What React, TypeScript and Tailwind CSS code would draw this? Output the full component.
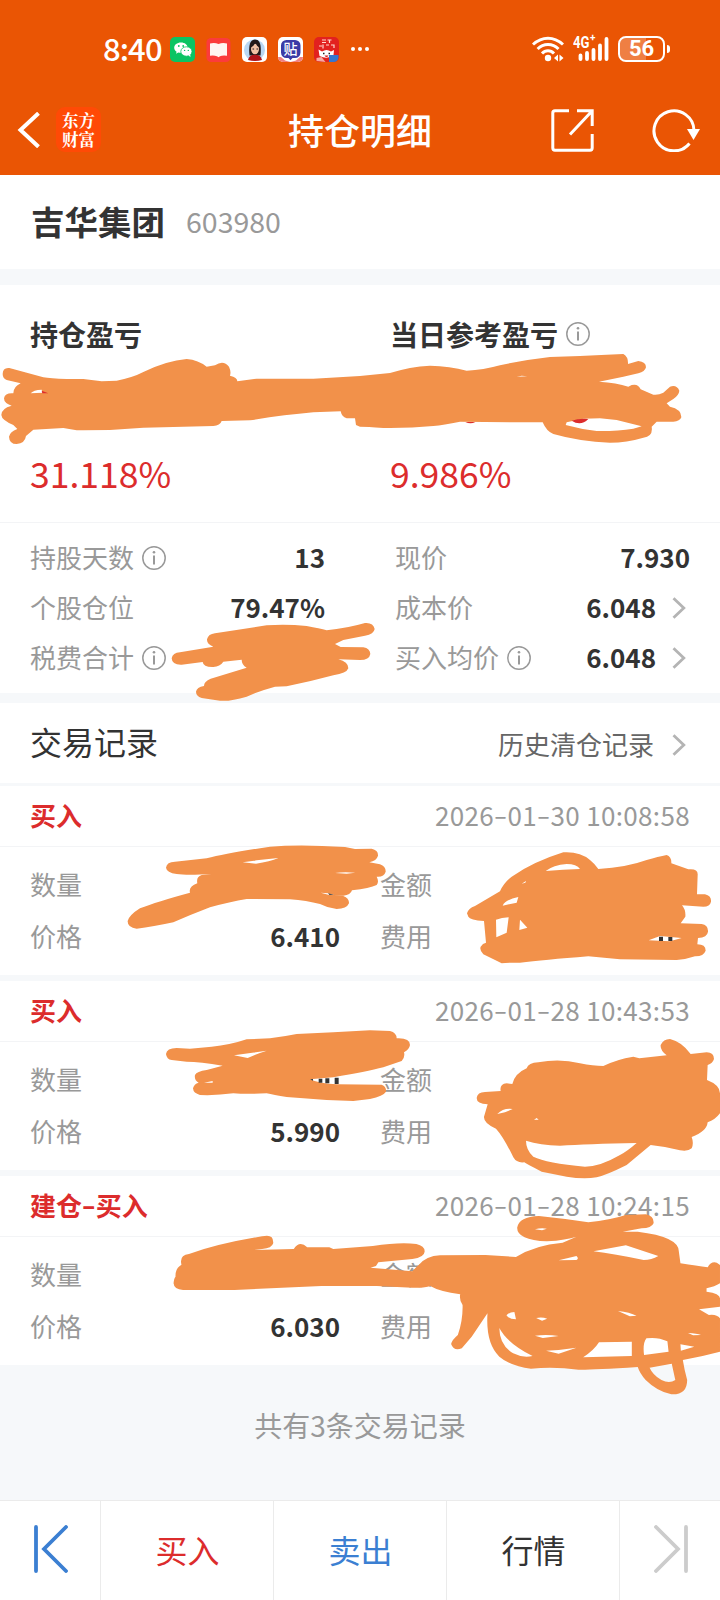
import { Fragment } from 'react';
import type { ReactNode } from 'react';

type Trade = {
    type: string;
    time: string;
    price: string;
};

const trades: Trade[] = [
    { type: '买入', time: '2026-01-30 10:08:58', price: '6.410' },
    { type: '买入', time: '2026-01-28 10:43:53', price: '5.990' },
    { type: '建仓-买入', time: '2026-01-28 10:24:15', price: '6.030' },
];

// Renders text with wider hyphens
const Dashed = ({ text }: { text: string }) => (
    <>
        {text.split('-').map((part, i) => (
            <Fragment key={i}>
                {i > 0 && <span className="mx-[2px] inline-block scale-x-150 -translate-y-px">-</span>}
                {part}
            </Fragment>
        ))}
    </>
);

const InfoIcon = () => (
    <svg className="ml-2 size-6 shrink-0" viewBox="0 0 24 24" fill="none" stroke="#999" strokeWidth="1.5">
        <circle cx="12" cy="12" r="11.2" />
        <path d="M12 9.6v8.8" strokeWidth="2" />
        <circle cx="12" cy="6.2" r="1.3" fill="#999" stroke="none" />
    </svg>
);

const Chevron = () => (
    <svg className="ml-4 w-[14px] h-[22px] shrink-0" viewBox="0 0 14 22" fill="none" stroke="#b4b4b4" strokeWidth="2.8">
        <path d="M1.5 1.2 11.8 11 1.5 20.8" />
    </svg>
);

const StatusBar = () => (
    <div className="flex h-[87px] items-center pt-[11px] pl-[103px] text-white">
        <span className="w-[67px] text-[31px] leading-none font-medium tracking-[-0.9px] -translate-y-[2px]">8:40</span>

        {/* Notification icons */}
        <div className="flex items-center gap-[11px]">
            <svg className="size-[25px]" viewBox="0 0 25 25">
                <rect width="25" height="25" rx="5" fill="#0ac463" />
                <path d="M11 5.5c-4 0-6.800 2.300-6.800 5.200 0 1.700.9 3.100 2.400 4l-.6 2 2.300-1.200c2.700.7 5 .2 6.800-1.200 1.700-1.200 2.500-2.300 2.500-3.800 0-2.800-2.800-5-6.600-5z" fill="#fff" />
                <ellipse cx="16.400" cy="14.500" rx="5.600" ry="4.700" fill="#fff" stroke="#0ac463" strokeWidth=".8" />
                <path d="m18.500 18 1.900 2.200-.1-3z" fill="#fff" />
                <g fill="#0ac463">
                    <circle cx="8.800" cy="9" r=".9" />
                    <circle cx="13.200" cy="9" r=".9" />
                    <circle cx="14.600" cy="13.400" r=".7" />
                    <circle cx="18.300" cy="13.400" r=".7" />
                </g>
            </svg>
            <svg className="size-[25px]" viewBox="0 0 25 25">
                <rect x=".5" y="1" width="24" height="24" rx="4.500" fill="#fb3b3b" />
                <path d="M4 6.500q4.500-1 8.500.4 4-1.400 8.500-.4v12.300q-4.500-.5-7 .4l-1.500 1-1.500-1q-3-.9-7-.4z" fill="#fff5f2" />
            </svg>
            <svg className="size-[25px]" viewBox="0 0 25 25">
                <rect width="25" height="25" rx="5" fill="#fff" />
                <circle cx="12.500" cy="13" r="10.500" fill="#b9d7f3" />
                <path d="M7.500 18.500C6.300 8 8.200 2.500 13 2.500s6.600 5 5.500 16z" fill="#23191a" />
                <ellipse cx="13" cy="12" rx="4" ry="5.300" fill="#f2c1a5" />
                <path d="M8.600 10.500Q12 9 13.500 5.800q1 3.500 4 4.700Q17 5 13 4.500t-4.400 6z" fill="#23191a" />
                <path d="M6 23q1-5.300 7-5.300t7 5.300q-7 2-14 0z" fill="#b11218" />
                <path d="M10.500 12h1.600m2.400 0h1.600" stroke="#23191a" />
            </svg>
            <div className="relative flex size-[25px] items-center justify-center overflow-hidden rounded-[5px] bg-white">
                <svg className="absolute inset-0 size-full" viewBox="0 0 25 25">
                    <path d="M0 20h25v5H0z" fill="#f08080" />
                    <path d="M3 20h19l-4 3.500-5.500 1.500L7 23.500z" fill="#fff" />
                    <path d="M8.500 3h8.500a5.500 5.500 0 0 1 5.500 5.500v7a5.500 5.500 0 0 1-5.500 5.500h-2.500l-2 2.200-2-2.200H8.500A5.500 5.500 0 0 1 3 15.500v-7A5.500 5.500 0 0 1 8.500 3z" fill="#3b3ba6" />
                </svg>
                <span className="relative text-[14px] leading-none font-medium -translate-y-px">贴</span>
            </div>
            <svg className="size-[25px]" viewBox="0 0 25 25">
                <rect width="25" height="25" rx="5" fill="#e2211f" />
                <path d="M8 3h4M8 5.500h4M13.500 3h4M15.500 3v3M5 9h3m1-1.500v4M12 8h3m2 0h3v3" stroke="#ffd9cf" strokeWidth="1.200" fill="none" />
                <path d="M4.500 12.500 8 14.500q4.500-3 9 0l3-1.500-.5 5q-6 5-14 1z" fill="#fff" />
                <path d="M9 16.500h1.500m4 0h1.500" stroke="#222" strokeWidth="1.300" />
                <path d="M10.500 18.500h4q-2 3-4 0z" fill="#d21a1a" />
                <path d="M2.500 24v-3l5-1 4 5z" fill="#f6a8a0" />
                <path d="M15 18h9.500v3q-1 4-5 4H15z" fill="#3477cf" />
            </svg>
        </div>
        <div className="ml-3 flex gap-[3px]">
            <span className="size-1 rounded-full bg-white" />
            <span className="size-1 rounded-full bg-white" />
            <span className="size-1 rounded-full bg-white" />
        </div>

        {/* Wi-Fi, mobile signal, battery */}
        <svg className="ml-[163px] w-8 h-[26px]" viewBox="0 0 32 26" fill="none" stroke="#fff" strokeWidth="3">
            <path d="M1 8.500Q8 2.200 16 2.200T31 8.500M5.600 13Q10 8.600 16 8.600T26.500 13M10 17.500q2.600-2.800 6-2.800t6 2.800" />
            <circle cx="16" cy="22" r="3.200" fill="#fff" stroke="none" />
            <path d="m26 18.500-4 3.500 4 3.500zM27.500 18.500l4 3.500-4 3.500z" fill="#fff" stroke="none" />
        </svg>
        <div className="relative ml-[9px] h-[26px] w-[36px]">
            <span className="absolute left-0 -top-px origin-left scale-x-[0.82] font-['Roboto',sans-serif] text-[16px] leading-none font-bold">4G</span>
            <span className="absolute left-[17px] -top-[3px] font-['Roboto',sans-serif] text-[10px] leading-none font-bold">+</span>
            <svg className="size-full" viewBox="0 0 36 26" stroke="#fff" strokeWidth="3.800" strokeLinecap="round">
                <path d="M7.500 19.500V23M14 17V23M20.500 14V23M27 9.500V23M33.500 3V23" />
            </svg>
        </div>
        <div className="relative ml-[9px] flex h-[26px] w-[47px] items-center justify-center overflow-hidden rounded-[8px] border-2 border-white">
            <div className="absolute left-0 top-0 h-full w-[26px] bg-white/25" />
            <span className="relative font-['Roboto',sans-serif] text-[22px] leading-none font-bold">56</span>
        </div>
        <span className="ml-[2px] h-[8px] w-[3px] rounded-r-full bg-white" />
    </div>
);

const NavBar = () => (
    <div className="grid h-[87px] grid-cols-[1fr_auto_1fr] items-center text-white">
        <div className="flex items-center pl-[17px] -translate-y-px">
            <svg className="w-[23px] h-[36px]" viewBox="0 0 23 36" fill="none" stroke="#fff" strokeWidth="4">
                <path d="M21.500 1.200 3.500 18l18 16.800" />
            </svg>
            <div className="ml-[16px] flex size-[45px] items-center justify-center rounded-[9px] bg-[#ff4a06]">
                <span className="w-[33px] font-['Noto_Serif_CJK_SC','Noto_Sans_CJK_SC',serif] text-[16.500px] leading-[19px] font-bold break-all">东方财富</span>
            </div>
        </div>
        <h1 className="text-[36px] leading-none font-medium -translate-y-[2px]">持仓明细</h1>
        <div className="flex items-center justify-end gap-[58px] pr-[20px]">
            <svg className="size-[43px]" viewBox="0 0 43 43" fill="none" stroke="#fff" strokeWidth="3">
                <path d="M18 1.800H4Q1.800 1.800 1.800 4V39Q1.800 41.200 4 41.200H39Q41.200 41.200 41.200 39V25" />
                <path d="M26 1.800H41.200V17M41 2 19 25.500" />
            </svg>
            <svg className="w-[48px] h-[43px]" viewBox="0 0 48 43" fill="none" stroke="#fff" strokeWidth="3">
                <path d="M42 21.500A20 20 0 1 0 37.500 34.500" />
                <path d="M35 20H48L41.500 31z" fill="#fff" stroke="none" />
            </svg>
        </div>
    </div>
);

const StatRow = ({ label, value, info, arrow }: { label: string; value?: string; info?: boolean; arrow?: boolean }) => (
    <div className="flex h-[50px] items-center">
        <span className="text-[26px] leading-none text-[#999] -translate-y-px">{label}</span>
        {info && <InfoIcon />}
        <span className="ml-auto text-[26px] leading-none font-bold -translate-y-px">{value}</span>
        {arrow && <Chevron />}
        {arrow && <span className="w-1" />}
    </div>
);

const Cell = ({ children }: { children: ReactNode }) => (
    <span className="text-[26px] leading-none text-[#999] -translate-y-px">{children}</span>
);

const TradeCard = ({ trade }: { trade: Trade }) => (
    <div className="mb-[6px] h-[189px] bg-white last:mb-0">
        <div className="flex h-[61px] items-center justify-between border-b border-[#f3f4f6] px-[30px]">
            <span className="text-[26px] leading-none font-bold text-[#dc2c2c] -translate-y-px">
                <Dashed text={trade.type} />
            </span>
            <span className="text-[26px] leading-none tracking-[0.35px] text-[#999] -translate-y-px">
                <Dashed text={trade.time} />
            </span>
        </div>
        <div className="grid grid-cols-[350px_1fr] px-[30px] pt-[12px]">
            <div className="flex h-[52px] items-center">
                <Cell>数量</Cell>
            </div>
            <div className="flex h-[52px] items-center">
                <Cell>金额</Cell>
            </div>
            <div className="flex h-[52px] items-center justify-between pr-[40px]">
                <Cell>价格</Cell>
                <span className="text-[26px] leading-none font-bold -translate-y-px">{trade.price}</span>
            </div>
            <div className="flex h-[52px] items-center">
                <Cell>费用</Cell>
            </div>
        </div>
    </div>
);

// Marker strokes that hide the private amounts
const Redactions = () => (
    <svg className="pointer-events-none absolute inset-0 h-[1600px] w-[720px]" viewBox="0 0 720 1600" fill="#f2914a" fillRule="evenodd">
        <g transform="translate(0 170) scale(.33333)">
            <path d="M8 612Q8 592 28 594L130 622Q150 626 200 627L250 627L305 634L350 632Q400 622 430 606Q500 572 560 567Q595 570 620 590L645 586Q670 568 687 590Q694 605 690 617Q712 622 712 634L770 626L940 626L1080 618L1170 609Q1230 590 1290 587Q1350 588 1400 602Q1450 600 1500 586Q1570 570 1650 561L1740 558L1820 554L1870 552Q1885 560 1884 582L1915 573Q1938 575 1938 592Q1935 605 1915 610L1870 620L1797 635Q1850 638 1885 650L1895 645Q1915 640 1922 658L1960 674Q1975 676 1990 668L2010 650Q2030 643 2038 662Q2037 675 2020 687L2000 700L2010 710Q2045 718 2044 742Q2040 754 2020 755L1970 755L1955 770Q1960 800 1930 803Q1880 818 1830 818Q1740 815 1660 792Q1640 785 1628 757L1570 757L1380 755Q1330 765 1300 768Q1230 775 1150 774Q1100 770 1080 770L1068 765L1065 745L1040 745Q1025 740 1022 724L940 727Q850 735 750 751L665 753Q660 767 640 768L430 773Q330 782 230 781L190 774L100 779L78 798Q75 820 50 822Q28 822 27 800Q30 785 52 777L40 765Q5 750 4 735Q4 715 35 707Q12 700 12 685Q15 668 40 670Q40 650 62 640L20 630Q8 625 8 612Z M92 670Q100 660 125 659L128 668Z M1550 620L1565 617L1582 619Z M1700 757L1750 746L1800 745L1850 750L1925 769L1900 776Q1850 784 1790 783Q1740 777 1697 765Z" />
            <path d="M1715 752Q1735 745 1765 747Q1742 770 1715 752ZM1396 756Q1412 763 1426 756ZM125 662L145 670L127 670Z" fill="#dc2c2c" />
        </g>
        <g transform="translate(0 440) scale(.33333)">
            <path d="M515 655Q518 638 540 637L640 620Q620 612 621 598Q625 582 645 580Q720 568 800 556Q860 552 920 558Q960 565 980 571Q1040 565 1095 549Q1120 547 1124 567Q1122 582 1095 587L1030 600L1005 612L1022 621L1090 622Q1110 625 1111 642Q1108 660 1080 660L1015 658Q1045 665 1045 685Q1040 700 1000 706Q930 725 860 739L825 740Q780 752 740 770Q690 785 660 782L605 774Q588 768 588 755Q590 742 612 738Q612 724 632 716L740 683Q725 675 725 659L670 665Q660 680 640 681Q610 682 608 666L545 674Q516 675 515 655Z" />
        </g>
        <g transform="translate(0 690) scale(.33333)">
            <path d="M498 533Q500 515 525 515L620 505Q680 490 810 470Q900 462 1035 471L1065 477L1115 476Q1135 480 1134 497Q1130 512 1108 517L1140 523Q1158 530 1157 545Q1152 562 1130 560Q1138 575 1130 585Q1110 595 1056 601Q1052 615 1030 617L1000 616L1030 618Q1048 625 1047 640Q1040 657 1010 657Q985 655 960 642Q920 632 870 628L740 627Q690 635 630 652Q570 675 520 697Q460 710 410 716Q382 712 383 693Q388 675 420 655Q470 635 570 608Q565 590 592 580Q588 560 605 555L635 552Q560 556 530 552Q500 548 498 533Z M728 517L770 511L835 504Q810 515 768 521Z M1005 549Q1030 545 1066 548L1040 551Z M962 608L985 610L1003 615L985 614Z" />
            <path d="M984 610L1002 614L988 614Z" fill="#222" />
        </g>
        <g transform="translate(360 690) scale(.33333)">
            <path d="M321 670Q325 655 345 648L420 604Q430 580 455 560Q520 515 610 487Q660 484 690 510Q705 522 715 537Q800 532 860 510Q895 500 920 495Q935 500 934 520L985 538Q1015 535 1013 555L1011 613L1035 613Q1055 618 1053 635Q1050 650 1030 650L966 646Q978 660 976 680L962 700L1025 702Q1045 705 1044 725Q1042 742 1014 744L1012 763Q1037 763 1037 782Q1030 800 1005 799Q980 808 950 810L780 808L685 799Q550 810 480 818Q440 818 425 820L370 793Q358 780 362 770Q368 760 378 758L372 693Q330 690 325 680Z M557 543Q580 525 620 522Q650 522 660 537Q610 538 557 543Z M485 581L498 573L496 578Z M428 647Q435 630 475 621L470 638Z M408 689Q425 683 446 682L440 728L409 742Z M480 689L502 713L478 720Z M866 751L900 738L965 744L930 754Z" />
            <path d="M897 740H909V753H897ZM925 741H937V753H925Z" fill="#333" />
        </g>
        <g transform="translate(0 960) scale(.33333)">
            <path d="M498 282Q500 264 530 264L570 266L635 260Q690 255 740 238L810 235Q850 230 890 222L1000 217L1110 211L1170 213Q1190 218 1190 235Q1230 233 1230 255Q1228 268 1212 277Q1216 290 1205 303L1150 322Q1100 335 1000 352L930 358Q960 372 1010 373L1145 374Q1160 380 1158 395Q1150 408 1110 417L1060 423Q960 420 860 411Q820 405 800 400Q740 403 700 400Q650 407 600 405Q580 400 579 385Q582 372 596 368Q582 360 585 345Q590 334 620 330L668 317Q600 305 560 305L515 300Q500 298 498 282Z M702 286L800 272Q760 285 743 294Z M612 368L638 363L638 368Z" />
            <path d="M930 358L939 357L939 362ZM956 356H967V368H956ZM976 355H988V370H976ZM1004 353H1016V372H1004Z" fill="#333" />
        </g>
        <g transform="translate(360 960) scale(.33333)">
            <path d="M350 414Q352 396 375 396L422 393Q418 372 440 370L457 372Q465 340 500 325Q505 308 535 307Q600 295 660 310Q700 318 730 318Q770 298 820 290L838 295L920 286Q900 270 902 255Q910 237 930 237Q965 245 992 282L1040 277Q1062 278 1062 297Q1058 310 1043 315L1041 360Q1080 375 1080 400L1080 460Q1065 480 1043 487Q1040 515 995 531Q1002 550 995 565Q985 575 960 571Q920 560 872 555L800 615Q740 645 710 652Q670 658 620 650L545 635Q500 612 493 607Q470 610 460 592Q430 530 408 506Q370 490 372 470L383 433Q350 432 350 414Z M412 462Q430 443 458 447L435 457Z M522 479L530 474L536 479Z M498 542Q540 555 600 557Q680 552 830 549Q800 575 780 585Q720 620 675 620Q560 610 520 590Q498 570 498 542Z" />
        </g>
        <g transform="translate(100 1180) scale(.3954 .33333)">
            <path d="M186 310Q187 295 191 290Q190 265 206 254Q200 225 225 222Q300 190 410 169Q440 160 438 190Q435 205 410 207L388 210L490 207Q505 180 524 202L580 202L590 207L690 198Q760 185 800 192Q822 198 821 215Q820 232 790 237L704 247L698 258L684 263L790 274Q800 260 806 255Q825 228 860 226L975 225L1052 231Q1100 195 1170 188L1205 170Q1180 180 1130 184Q1055 180 1055 143Q1060 110 1110 108Q1170 115 1235 127Q1290 120 1330 105L1380 103Q1402 108 1400 130Q1395 145 1370 145L1322 155L1360 155Q1465 170 1464 215L1468 250Q1510 258 1537 262Q1545 243 1560 248L1568 255V310Q1555 320 1534 325L1534 335Q1568 340 1568 355V380L1515 388L1540 405Q1560 402 1568 415V515Q1520 530 1474 540Q1478 570 1485 600Q1485 645 1445 643Q1410 635 1380 600Q1365 580 1360 561Q1240 570 1210 569Q1150 560 1090 566Q1040 560 1010 530Q975 490 980 400L940 470L915 505Q895 515 888 492Q890 480 905 465Q918 420 917 375Q908 360 911 343Q860 335 835 318Q820 325 790 323L700 318L560 318L340 330L210 330Q187 328 186 310Z M1100 148Q1115 143 1130 146L1118 151Z M1160 241L1205 228Q1212 235 1205 240Z M1248 214L1330 196L1412 228Q1395 240 1375 240Q1300 222 1248 214Z M1028 406Q1035 396 1048 396L1052 418Q1035 418 1028 406Z M1103 414Q1118 410 1131 416L1118 422Z M1310 393Q1340 397 1357 407L1340 409Z M1100 467Q1130 462 1160 468L1120 474Z M1010 444Q1030 490 1094 528Q1070 535 1045 520Q1010 495 1010 444Z M1128 512L1160 510L1205 503L1160 521Z M1222 532Q1250 510 1262 487L1345 485L1345 528Z M1376 525Q1372 490 1382 475Q1410 470 1435 484L1438 515Z M1390 563L1446 551L1455 600Q1440 612 1420 600Q1398 585 1390 563Z M1468 493L1503 500L1469 512Z M1487 459Q1510 460 1520 465L1500 466Z" />
        </g>
    </svg>
);

const BottomBar = () => (
    <nav className="grid h-[100px] grid-cols-[100px_173px_173px_173px_101px] border-t border-[#ebebeb] bg-white pb-[3px] text-[32px] leading-none [&>*]:-mb-[3px] [&>*]:flex [&>*]:items-center [&>*]:justify-center [&>*]:pb-[3px] [&>*+*]:border-l [&>*+*]:border-[#ebebeb]">
        <button className="pl-px">
            <svg className="w-[34px] h-[48px]" viewBox="0 0 34 48" fill="none" stroke="#3b7fd2" strokeWidth="3.800" strokeLinecap="round">
                <path d="M2 2V46M32 2 10 24 32 46" />
            </svg>
        </button>
        <button className="pl-px text-[#dc2c2c]">买入</button>
        <button className="pl-px text-[#3b7fd2]">卖出</button>
        <button className="pl-px text-[#333]">行情</button>
        <button className="pl-px">
            <svg className="w-[34px] h-[48px]" viewBox="0 0 34 48" fill="none" stroke="#ccc" strokeWidth="3.800" strokeLinecap="round">
                <path d="M32 2V46M2 2 24 24 2 46" />
            </svg>
        </button>
    </nav>
);

export default function App() {
    return (
        <div className="relative flex h-[1600px] w-[720px] flex-col overflow-hidden bg-[#f6f8fa] font-['Noto_Sans_CJK_SC',sans-serif] text-[#333]">
            <header className="h-[175px] bg-[#ea5504]">
                <StatusBar />
                <NavBar />
            </header>

            <section className="flex h-[94px] items-center bg-white px-[31px]">
                <h2 className="text-[33.500px] leading-none font-bold -translate-y-px">吉华集团</h2>
                <span className="ml-[21px] text-[28.500px] leading-none text-[#999] -translate-y-px">603980</span>
            </section>

            {/* Profit and loss */}
            <section className="mt-4 h-[238px] border-b border-[#f3f4f6] bg-white px-[30px]">
                <div className="grid grid-cols-[360px_1fr] pt-[35px]">
                    <h3 className="text-[28px] leading-[28px] font-bold">持仓盈亏</h3>
                    <div className="flex items-center">
                        <h3 className="text-[28px] leading-[28px] font-bold">当日参考盈亏</h3>
                        <InfoIcon />
                    </div>
                </div>
                <div className="mt-[107px] grid grid-cols-[360px_1fr] text-[35.500px] leading-[36px] text-[#dc2c2c]">
                    <span>31.118%</span>
                    <span>9.986%</span>
                </div>
            </section>
            <section className="grid h-[170px] grid-cols-[295px_295px] justify-between bg-white px-[30px] pt-[10px]">
                <div>
                    <StatRow label="持股天数" value="13" info />
                    <StatRow label="个股仓位" value="79.47%" />
                    <StatRow label="税费合计" info />
                </div>
                <div>
                    <StatRow label="现价" value="7.930" />
                    <StatRow label="成本价" value="6.048" arrow />
                    <StatRow label="买入均价" value="6.048" info arrow />
                </div>
            </section>

            {/* Trade records */}
            <section className="mt-[10px] mb-[3px] flex h-[80px] items-center bg-white px-[30px]">
                <h2 className="text-[32px] leading-none -translate-y-[2px]">交易记录</h2>
                <span className="ml-auto pt-[2px] text-[26px] leading-none text-[#666]">历史清仓记录</span>
                <span className="w-[2px]" />
                <div className="pt-[4px]">
                    <Chevron />
                </div>
                <span className="w-1" />
            </section>
            <div>
                {trades.map((trade) => (
                    <TradeCard key={trade.time} trade={trade} />
                ))}
            </div>
            <p className="flex flex-1 justify-center pt-[46px] text-[28px] leading-[28px] text-[#999]">共有3条交易记录</p>

            <BottomBar />
            <Redactions />
        </div>
    );
}
